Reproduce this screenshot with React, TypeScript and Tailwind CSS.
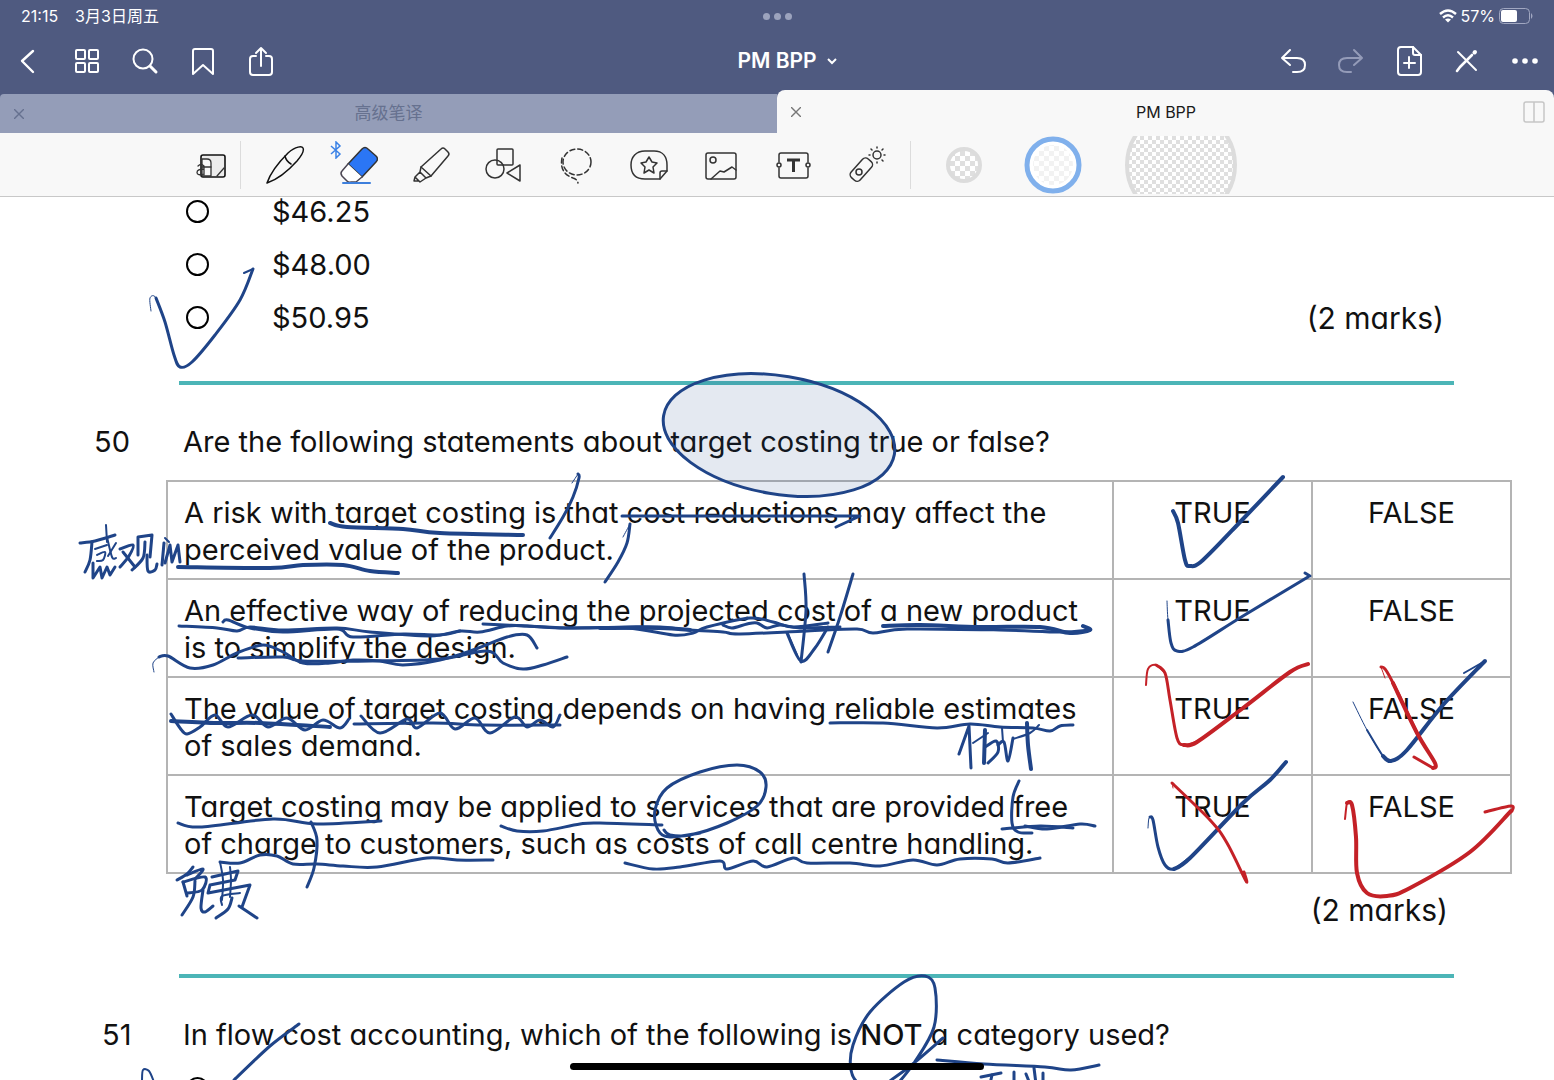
import React from "react";

type Point = [number, number];

interface Stroke {
  points: string;
  width?: number;
  red?: boolean;
  sharp?: boolean;
}

// Pen strokes, in the coordinates of the ink layer's viewBox
const strokes: Stroke[] = [
  // tick next to $50.95
  { points: "151,311 150,298 156,298 165,322", width: 1 },
  { points: "156,298 165,322 174,355 180,367 192,362 215,335 240,300 253,269", width: 3 },
  { points: "253,269 244,273", width: 2 },
  // row 1
  { points: "330,523 347,527 403,529 440,533 523,535", width: 4 },
  { points: "178,567 270,568 303,565 343,565 370,571 398,573", width: 4 },
  { points: "572,483 578,474", width: 1 },
  { points: "578,474 579,478 573,497 563,517 550,538", width: 3 },
  { points: "623,537 630,524", width: 1 },
  { points: "630,524 627,543 618,562 605,582", width: 3 },
  { points: "622,516 860,516 836,527", width: 3, sharp: true },
  { points: "1173,511 1178,523 1185,560 1190,566 1203,560 1243,519 1283,477", width: 4 },
  // row 2
  { points: "179,626 217,628 237,631 250,627 283,630 337,628 370,632 430,636 460,631 480,632 507,626 527,626 560,628 627,628 673,635 693,633 707,627 750,618 773,622 793,627 828,623", width: 3 },
  { points: "223,622 228,620 250,628 283,632 337,629 353,637 403,634 440,635 460,631", width: 3 },
  { points: "483,624 527,626 573,628 627,627 660,627 690,630 723,632 740,634 807,631 857,629 873,633 907,629 1000,630 1060,632 1090,630", width: 3 },
  { points: "883,626 920,625 980,627 1040,627 1070,633 1090,630 1083,626", width: 4 },
  { points: "600,628 660,628 690,630", width: 4 },
  { points: "723,625 732,628 747,624 757,623 767,628 780,625 800,628 840,627", width: 3 },
  { points: "154,672 153,663 159,657", width: 1 },
  { points: "159,657 168,656 190,668 213,665 237,653 263,645 283,652 303,663 330,663 353,660 380,661 403,665 440,660 473,650 507,637 527,635 537,648", width: 3 },
  { points: "238,658 283,657 303,661 370,661 440,659 487,651 503,663 523,669 543,665 567,657", width: 3 },
  { points: "804,574 806,610 801,662", width: 3 },
  { points: "787,633 801,661 815,648 828,627", width: 3 },
  { points: "788,634 797,655", width: 2 },
  { points: "853,574 840,617 828,652", width: 3 },
  { points: "1167,601 1168,620 1171,642", width: 1 },
  { points: "1168,620 1171,643 1177,651 1193,647 1243,616 1308,577", width: 3 },
  { points: "1310,576 1305,573", width: 3 },
  // row 3
  { points: "171,721 217,723 260,723 330,727", width: 4 },
  { points: "171,714 180,728 187,734 200,727 215,715 228,727 252,715 268,727 287,718 305,730 323,720 340,728 349,719", width: 3 },
  { points: "354,724 433,723 483,725 560,725", width: 3 },
  { points: "361,716 380,733 407,719 417,728 440,713 455,729 475,718 490,733 515,717 527,727 540,720 553,727 560,715", width: 3 },
  { points: "830,723 883,723 937,728 970,724 1000,727 1033,728 1050,731 1060,726 1073,725", width: 3 },
  { points: "1146,685 1148,669 1156,665 1165,673", width: 2, red: true },
  { points: "1156,665 1165,673 1170,700 1177,738 1184,745 1197,742", width: 3, red: true },
  { points: "1184,745 1197,742 1243,708 1290,672 1308,664", width: 4, red: true },
  { points: "1353,702 1367,730 1383,757", width: 1 },
  { points: "1367,730 1383,756 1391,761", width: 2 },
  { points: "1383,756 1391,761 1407,750 1443,705 1485,661", width: 4 },
  { points: "1485,661 1464,673", width: 2 },
  { points: "1385,678 1381,667", width: 1, red: true },
  { points: "1381,667 1385,669 1393,683 1417,733", width: 3, red: true },
  { points: "1393,683 1417,733 1435,763 1433,768", width: 4, red: true },
  { points: "1433,768 1414,757", width: 3, red: true },
  // row 4
  { points: "178,823 200,827 273,819 317,824 381,821", width: 3 },
  { points: "501,826 517,831 543,831 580,824 600,823 662,825", width: 3 },
  { points: "664,830 670,835 690,835 727,823 757,806 766,787 760,772 737,765 700,772 667,788 655,810 658,830 670,837 700,833", width: 3 },
  { points: "220,862 240,863 260,855 277,856 293,864 317,864 343,866 377,867 427,858 457,860 493,860", width: 3 },
  { points: "311,822 317,840 314,868 307,887", width: 3 },
  { points: "625,863 653,869 680,867 720,861 727,869 753,861 767,867 793,858 807,863 850,863 880,866 913,860 937,865 960,859 992,859 1008,863 1040,858", width: 3 },
  { points: "1019,781 1013,797 1012,823 1018,832 1032,833", width: 3 },
  { points: "1002,829 1040,826 1073,828", width: 3 },
  { points: "1025,826 1047,829 1080,824 1095,826", width: 3 },
  { points: "1148,828 1149,818 1152,818", width: 1 },
  { points: "1150,817 1153,820 1158,847 1165,865 1174,869 1190,858", width: 3 },
  { points: "1174,869 1190,858 1243,803 1270,780 1286,762", width: 4 },
  { points: "1173,788 1172,783", width: 1, red: true },
  { points: "1172,783 1210,820 1227,843 1246,881 1244,872", width: 3, red: true },
  { points: "1345,819 1347,803 1350,802", width: 2, red: true },
  { points: "1347,803 1352,805 1356,837 1357,873 1367,893 1387,896 1410,888 1470,852 1511,811", width: 4, red: true },
  { points: "1512,811 1511,806 1485,812", width: 3, red: true },
  // margin note left of row 1
  { points: "106,525 107,542", width: 2 },
  { points: "80,543 95,541 115,535", width: 3 },
  { points: "92,542 90,560 85,572", width: 3 },
  { points: "95,549 107,545", width: 2 },
  { points: "97,555 105,552 103,560 97,561", width: 2 },
  { points: "107,537 112,557 116,558", width: 2 },
  { points: "116,543 108,556", width: 2 },
  { points: "93,563 93,578 100,567 102,578 107,567 110,575 115,567", width: 3, sharp: true },
  { points: "120,549 133,545 129,556 120,567", width: 3 },
  { points: "123,552 135,567", width: 3 },
  { points: "138,555 138,537 152,535 150,557", width: 3, sharp: true },
  { points: "145,542 143,558 132,570", width: 3 },
  { points: "147,555 148,571 155,570 157,564", width: 3 },
  { points: "162,565 164,543", width: 3 },
  { points: "165,563 170,545 172,562 178,545 180,562", width: 3, sharp: true },
  { points: "165,538 169,542", width: 2 },
  // note under row 4
  { points: "193,867 187,874 177,880", width: 3 },
  { points: "187,875 203,869 195,879", width: 3 },
  { points: "183,882 187,896", width: 3 },
  { points: "183,882 205,877 202,890 187,893", width: 3 },
  { points: "195,881 193,897 182,915", width: 3 },
  { points: "203,890 201,908 205,912 213,906", width: 3 },
  { points: "212,877 238,871 235,880 210,885 208,893 250,885 242,907", width: 3, sharp: true },
  { points: "220,862 223,880 222,900", width: 2 },
  { points: "230,867 231,880 230,897", width: 2 },
  { points: "222,905 222,896 240,893", width: 2 },
  { points: "232,898 228,909 216,918", width: 3 },
  { points: "239,906 257,918", width: 3 },
  // note under "reliable estimates"
  { points: "959,754 969,726 971,768", width: 3, sharp: true },
  { points: "973,743 988,733", width: 2 },
  { points: "985,730 984,763", width: 4 },
  { points: "985,747 996,741 998,752 988,763", width: 3 },
  { points: "1002,728 1003,742", width: 2 },
  { points: "998,745 1004,742 1008,761 1013,738", width: 3 },
  { points: "1013,739 1030,733 1039,725", width: 2 },
  { points: "1027,723 1028,745 1031,769", width: 4 },
  // question 51
  { points: "299,1024 270,1046 234,1080", width: 3 },
  { points: "142,1080 143,1070 149,1071 154,1082", width: 2 },
  { points: "943,1038 914,1063 894,1078 880,1086 860,1084 851,1070 853,1045 870,1012 904,982 925,976 935,988 934,1027 914,1063 894,1088", width: 3 },
  { points: "937,1060 984,1064 1045,1067 1071,1070 1099,1065", width: 3 },
  { points: "981,1077 1001,1073", width: 3 },
  { points: "992,1075 990,1084", width: 3 },
  { points: "1014,1072 1014,1084", width: 3 },
  { points: "1026,1074 1030,1084", width: 3 },
  { points: "1034,1068 1036,1084", width: 3 },
  { points: "1043,1073 1043,1084", width: 3 },
];

const parse = (points: string): Point[] =>
  points.split(" ").map((p) => p.split(",").map(Number) as Point);

const toPath = ({ points, sharp }: Stroke) => {
  const p = parse(points);
  let d = `M${p[0][0]} ${p[0][1]}`;
  for (let i = 0; i < p.length - 1; i++) {
    const b = p[i];
    const c = p[i + 1];
    if (sharp) {
      d += `L${c[0]} ${c[1]}`;
      continue;
    }
    const a = p[i - 1] || b;
    const e = p[i + 2] || c;
    d += `C${b[0] + (c[0] - a[0]) / 6} ${b[1] + (c[1] - a[1]) / 6} ${c[0] - (e[0] - b[0]) / 6} ${c[1] - (e[1] - b[1]) / 6} ${c[0]} ${c[1]}`;
  }
  return d;
};

const InkLayer = () => (
  <svg
    className="pointer-events-none absolute inset-0 h-full w-full"
    viewBox="0 197 1554 883"
    fill="none"
    strokeLinecap="round"
    strokeLinejoin="round"
    role="img"
    aria-label="Handwritten notes"
  >
    <ellipse
      cx="779"
      cy="435"
      rx="117"
      ry="59"
      transform="rotate(9.6 779 435)"
      fill="#1f4788"
      fillOpacity="0.12"
      stroke="#1f4488"
      strokeWidth="3"
    />
    {strokes.map((s, i) => (
      <path
        key={i}
        d={toPath(s)}
        stroke={s.red ? "#c42127" : "#1f4488"}
        strokeWidth={s.width}
      />
    ))}
  </svg>
);

interface IconProps {
  children: React.ReactNode;
  width?: number;
}

const Icon = ({ children, width = 2 }: IconProps) => (
  <svg
    className="h-10 w-10"
    viewBox="0 0 40 40"
    fill="none"
    stroke="currentColor"
    strokeWidth={width}
    strokeLinecap="round"
    strokeLinejoin="round"
    aria-hidden="true"
  >
    {children}
  </svg>
);

interface Action {
  label: string;
  icon: React.ReactNode;
  dim?: boolean;
}

const leftActions: Action[] = [
  { label: "Back", icon: <path d="M24 10 13 20l11 11" strokeWidth="2.4" /> },
  {
    label: "Pages",
    icon: (
      <>
        <rect x="9" y="9" width="9" height="9" rx="1" />
        <rect x="22" y="9" width="9" height="9" rx="1" />
        <rect x="9" y="22" width="9" height="9" rx="1" />
        <rect x="22" y="22" width="9" height="9" rx="1" />
      </>
    ),
  },
  {
    label: "Search",
    icon: (
      <>
        <circle cx="18" cy="18" r="9.5" />
        <path d="m25 25 6 6" strokeWidth="3" />
      </>
    ),
  },
  { label: "Bookmark", icon: <path d="M10 33V10q0-2 2-2h16q2 0 2 2v23l-10-9Z" /> },
  {
    label: "Share",
    icon: (
      <>
        <path d="M15 15h-3q-3 0-3 3v13q0 3 3 3h16q3 0 3-3V18q0-3-3-3h-3" />
        <path d="M20 25V7m-5 5 5-5 5 5" />
      </>
    ),
  },
];

const rightActions: Action[] = [
  { label: "Undo", icon: <path d="M17 9 9 17l8 7M9 17h15q8 0 8 7t-8 7h-4" /> },
  { label: "Redo", dim: true, icon: <path d="m23 9 8 8-8 7M31 17H16q-8 0-8 7t8 7h4" /> },
  {
    label: "Add page",
    icon: (
      <>
        <path d="M24 6H12q-3 0-3 3v22q0 3 3 3h17q3 0 3-3V14Z" />
        <path d="M24 6v6q0 2 2 2h6M20 16v11M15 22h11" />
      </>
    ),
  },
  {
    label: "Stop writing",
    icon: (
      <>
        <path d="m11 11 18 18" />
        <path d="m10 30 3-4L25 14" strokeWidth="2.6" />
        <path d="m27.500 11.500.5-.5" strokeWidth="4" />
      </>
    ),
  },
  {
    label: "More",
    icon: (
      <g fill="currentColor" stroke="none">
        <circle cx="10" cy="20" r="2.8" />
        <circle cx="20" cy="20" r="2.8" />
        <circle cx="30" cy="20" r="2.8" />
      </g>
    ),
  },
];

const tools: Action[] = [
  {
    label: "Pen",
    icon: (
      <g stroke="#111">
        <path d="M2 38C5 29 13 18 23 8 31 1 37 1 38 3s0 6-6 13C23 26 11 35 2 38Z" />
        <path d="M20 11q1 5 6 8" />
      </g>
    ),
  },
  {
    label: "Eraser",
    icon: (
      <>
        <path d="M24 4q3-3 6 0l8 7q3 3 0 6L24 32 10 19Z" fill="#2b76f5" />
        <path d="m10 19-6 7q-2 2 0 5l5 5q2 2 4 1h5l6-5" stroke="#4b4653" fill="#fff" />
        <path d="M5 38h27" stroke="#3d7fdc" strokeWidth="2" />
      </>
    ),
  },
  {
    label: "Highlighter",
    icon: (
      <>
        <path d="M10 22 30 4q2-2 4 0l3 3q2 2 0 4L20 31Z" />
        <path d="m10 22-1 5 6 6 5-2M9 27l-5 5 5 5 6-4M4 32l-1 4h5" />
      </>
    ),
  },
  {
    label: "Shapes",
    icon: (
      <>
        <rect x="14" y="4" width="16" height="16" rx="1" />
        <circle cx="12" cy="24" r="9" />
        <path d="M24 28 37 20v16Z" />
      </>
    ),
  },
  {
    label: "Lasso",
    icon: (
      <>
        <ellipse cx="21" cy="17" rx="14" ry="13" strokeDasharray="5 3" />
        <path d="M6 13c-2 10 2 17 11 20q4 1 5 5" strokeDasharray="5 3" />
      </>
    ),
  },
  {
    label: "Stickers",
    icon: (
      <>
        <path d="M31 34H16C6 34 2 28 2 20S7 6 16 6h9c9 0 13 6 13 14v6Z" />
        <path d="M38 26h-5q-2 0-2 2v6" />
        <path d="m20 12 3 5 5 1-4 4 1 6-5-3-5 3 1-6-4-4 5-1Z" />
      </>
    ),
  },
  {
    label: "Image",
    icon: (
      <>
        <rect x="5" y="8" width="30" height="26" rx="2" />
        <circle cx="12" cy="15" r="3" />
        <path d="m10 34 9-8 4 1 8-5 4 3" />
      </>
    ),
  },
  {
    label: "Text",
    icon: (
      <>
        <path d="M5 17V10q0-2 2-2h25q2 0 2 2v7M5 23v8q0 2 2 2h25q2 0 2-2v-8" />
        <circle cx="5" cy="20" r="2" />
        <circle cx="34" cy="20" r="2" />
        <path d="M13 15h13M19.500 15v12" strokeWidth="3" strokeLinecap="butt" />
      </>
    ),
  },
  {
    label: "Laser pointer",
    icon: (
      <>
        <rect x="-6" y="-13" width="12" height="25" rx="4" transform="translate(14 25) rotate(42)" />
        <circle cx="12" cy="27" r="3" />
        <circle cx="30" cy="10" r="4" />
        <path d="M30 2v1M30 17v1M22 10h1M37 10h1M24 4l1 1M35 15l1 1M35 5l1-1" />
      </>
    ),
  },
];

const ActionButton = ({ label, icon, dim }: Action) => (
  <button
    type="button"
    aria-label={label}
    className={
      dim
        ? "flex w-[58px] items-center justify-center text-[#949bb8]"
        : "flex w-[58px] items-center justify-center text-white"
    }
  >
    <Icon>{icon}</Icon>
  </button>
);

const StatusBar = () => (
  <div className="grid h-8 grid-cols-3 items-center px-[21px] text-base text-white">
    <div className="flex gap-[17px]">
      <span>21:15</span>
      <span>3月3日周五</span>
    </div>
    <div className="flex justify-center gap-1">
      <span className="h-[7px] w-[7px] rounded-full bg-[#9ca3bd]" />
      <span className="h-[7px] w-[7px] rounded-full bg-[#9ca3bd]" />
      <span className="h-[7px] w-[7px] rounded-full bg-[#9ca3bd]" />
    </div>
    <div className="flex items-center justify-end gap-1">
      <svg className="h-[14px] w-[18px]" viewBox="0 0 18 14" fill="none" stroke="currentColor" strokeWidth="2.4" aria-hidden="true">
        <path d="M1 5q8-7 16 0M4 8.500q5-4.500 10 0" />
        <path d="m9 13.500 3-3q-3-2-6 0Z" fill="currentColor" stroke="none" />
      </svg>
      <span>57%</span>
      <svg className="h-4 w-[34px]" viewBox="0 0 34 16" aria-hidden="true">
        <rect x="0.500" y="0.500" width="30" height="15" rx="4" fill="none" stroke="#a1a7c1" />
        <rect x="2" y="2" width="16" height="12" rx="2" fill="#fff" />
        <path d="M32 5q3 3 0 6Z" fill="#a1a7c1" />
      </svg>
    </div>
  </div>
);

const CloseIcon = () => (
  <svg className="h-[10px] w-[10px]" viewBox="0 0 10 10" stroke="currentColor" strokeWidth="1.400" aria-hidden="true">
    <path d="m0 0 10 10M10 0 0 10" />
  </svg>
);

const Tabs = () => (
  <div className="grid h-[43px] grid-cols-2 items-end">
    <div className="flex h-[39px] items-center rounded-tl bg-[#949db8] pr-6 pl-[14px] text-[#66718f]">
      <button type="button" aria-label="Close 高级笔译">
        <CloseIcon />
      </button>
      <a href="#notes" className="flex-1 text-center text-[17px]">
        高级笔译
      </a>
    </div>
    <div className="flex h-[43px] items-center rounded-t-lg bg-[#f8f8f8] pr-[9px] pl-[14px] text-[#1a1a1a]">
      <button type="button" aria-label="Close PM BPP" className="text-[#777]">
        <CloseIcon />
      </button>
      <a href="#pm-bpp" className="flex-1 pl-2 text-center text-base">
        PM BPP
      </a>
      <button type="button" aria-label="Split view">
        <svg className="h-[22px] w-[22px]" viewBox="0 0 22 22" fill="none" stroke="#c6c6c6" strokeWidth="1.500" aria-hidden="true">
          <rect x="1" y="1" width="20" height="20" rx="2" />
          <path d="M11 1v20" />
        </svg>
      </button>
    </div>
  </div>
);

const Checker = ({ size }: { size: number }) => (
  <pattern id={`checker-${size}`} width={size * 2} height={size * 2} patternUnits="userSpaceOnUse">
    <rect width={size} height={size} fill="#dfdfdf" />
    <rect x={size} y={size} width={size} height={size} fill="#dfdfdf" />
  </pattern>
);

const Toolbar = () => (
  <div className="flex h-16 items-center border-b border-[#c8c8c8] bg-[#f8f8f8] pl-[191px] text-[#333]">
    <button type="button" aria-label="Zoom window">
      <Icon width={1.3}>
        <rect x="10" y="10" width="24" height="22" rx="2" stroke="#111" strokeWidth="1.6" fill="#ececec" />
        <path d="M11 14h5q4 0 4 4v13h-9Z" fill="#f8f8f8" />
        <path d="M11 22h9M7 21q3-3 6 0v9M13 24q-7 0-7 3.500t7 1.500M26 31l7-8" />
      </Icon>
    </button>
    <div className="ml-[9px] h-12 w-px bg-[#dcdcdc]" />
    <div className="ml-2 grid w-[654px] grid-cols-9">
      {tools.map((tool) => (
        <button
          key={tool.label}
          type="button"
          aria-label={tool.label}
          className="relative flex justify-center"
        >
          {tool.label === "Eraser" && (
            <svg
              className="absolute -top-1 left-2 h-[18px] w-3"
              viewBox="0 0 12 18"
              fill="none"
              stroke="#3b82e6"
              strokeWidth="1.500"
              aria-hidden="true"
            >
              <path d="m1 5 9 8-4 4V1l4 4-9 8" />
            </svg>
          )}
          <Icon width={1.5}>{tool.icon}</Icon>
        </button>
      ))}
    </div>
    <div className="ml-[7px] h-12 w-px bg-[#dcdcdc]" />
    <button type="button" aria-label="Small eraser" className="ml-[34px]">
      <svg className="h-[38px] w-[38px]" viewBox="0 0 38 38" aria-hidden="true">
        <Checker size={5} />
        <circle cx="19" cy="19" r="16" fill="#fff" />
        <circle cx="19" cy="19" r="16" fill="url(#checker-5)" stroke="#dcdcdc" strokeWidth="4" />
      </svg>
    </button>
    <button type="button" aria-label="Medium eraser" aria-pressed="true" className="ml-[41px]">
      <svg className="h-[58px] w-[58px]" viewBox="0 0 58 58" aria-hidden="true">
        <circle cx="29" cy="29" r="26" fill="#fff" />
        <circle cx="29" cy="29" r="20" fill="url(#checker-5)" opacity="0.4" />
        <circle cx="29" cy="29" r="26" fill="none" stroke="#80b0ec" strokeWidth="5" />
      </svg>
    </button>
    <button type="button" aria-label="Large eraser" className="ml-[42px]">
      <svg className="h-[58px] w-[114px]" viewBox="0 0 114 58" aria-hidden="true">
        <Checker size={4} />
        <circle cx="57" cy="29" r="54" fill="#fff" />
        <circle cx="57" cy="29" r="54" fill="url(#checker-4)" stroke="#dcdcdc" strokeWidth="4" />
      </svg>
    </button>
  </div>
);

const prices = ["$46.25", "$48.00", "$50.95"];

const statements = [
  ["A risk with target costing is that cost reductions may affect the", "perceived value of the product."],
  ["An effective way of reducing the projected cost of a new product", "is to simplify the design."],
  ["The value of target costing depends on having reliable estimates", "of sales demand."],
  ["Target costing may be applied to services that are provided free", "of charge to customers, such as costs of call centre handling."],
];

const Document = () => (
  <main className="relative flex-1 overflow-hidden bg-white text-[29px] leading-[37px] text-[#111] [font-feature-settings:'cv11']">
    <div className="-mt-3 pr-[110px] pl-[186px]">
      {prices.map((price, i) => (
        <div key={price} className="flex h-[53px] items-center leading-7">
          <input
            id={`price-${i}`}
            type="radio"
            name="price"
            className="h-[23px] w-[23px] appearance-none rounded-full border-2 border-black"
          />
          <label htmlFor={`price-${i}`} className="ml-[63px] flex-1">
            {price}
          </label>
          {i === 2 && <span className="text-[30px]">(2 marks)</span>}
        </div>
      ))}
    </div>
    <hr className="mt-[37px] mr-[100px] ml-[179px] h-1 border-0 bg-[#4cb5b7]" />
    <h2 className="mt-[38px] flex">
      <span className="w-[183px] pl-[94px]">50</span>
      Are the following statements about target costing true or false?
    </h2>
    <div className="mt-5 pr-[42px] pl-[166px]">
      <table className="w-full table-fixed border-collapse">
        <colgroup>
          <col />
          <col className="w-[199px]" />
          <col className="w-[199px]" />
        </colgroup>
        <tbody>
          {statements.map(([first, second]) => (
            <tr key={first} className="h-[98px] align-top">
              <td className="border-2 border-[#b4b4b4] px-4 pt-3 whitespace-nowrap">
                {first}
                <br />
                {second}
              </td>
              <td className="border-2 border-[#b4b4b4] pt-3 text-center">TRUE</td>
              <td className="border-2 border-[#b4b4b4] pt-3 text-center">FALSE</td>
            </tr>
          ))}
        </tbody>
      </table>
    </div>
    <p className="mt-[18px] pr-[106px] text-right text-[30px]">(2 marks)</p>
    <hr className="mt-[45px] mr-[100px] ml-[179px] h-1 border-0 bg-[#4cb5b7]" />
    <h2 className="mt-[38px] flex">
      <span className="w-[183px] pl-[102px]">51</span>
      <span>
        In flow cost accounting, which of the following is <span className="font-medium">NOT</span> a category used?
      </span>
    </h2>
    <div className="mt-6 pl-[186px]">
      <input
        type="radio"
        name="category"
        aria-label="First category"
        className="block h-[23px] w-[23px] appearance-none rounded-full border-2 border-black"
      />
    </div>
    <InkLayer />
    <div className="absolute inset-x-0 bottom-[10px] mx-auto h-[7px] w-[414px] rounded-full bg-black" />
  </main>
);

const App: React.FC = () => (
  <div className="flex h-screen flex-col bg-[#4f5a80] font-['Inter','Noto_Sans_CJK_SC',sans-serif]">
    <header>
      <StatusBar />
      <nav className="flex h-[58px] items-center justify-between" aria-label="Document">
        <div className="flex flex-1">
          {leftActions.map((action) => (
            <ActionButton key={action.label} {...action} />
          ))}
        </div>
        <button type="button" className="flex items-center gap-[10px] pl-5 text-[21px] font-semibold text-white">
          PM BPP
          <svg className="h-2 w-[10px]" viewBox="0 0 10 8" fill="none" stroke="currentColor" strokeWidth="2" aria-hidden="true">
            <path d="m1 2 4 4 4-4" />
          </svg>
        </button>
        <div className="flex flex-1 justify-end">
          {rightActions.map((action) => (
            <ActionButton key={action.label} {...action} />
          ))}
        </div>
      </nav>
      <Tabs />
      <Toolbar />
    </header>
    <Document />
  </div>
);

export default App;
